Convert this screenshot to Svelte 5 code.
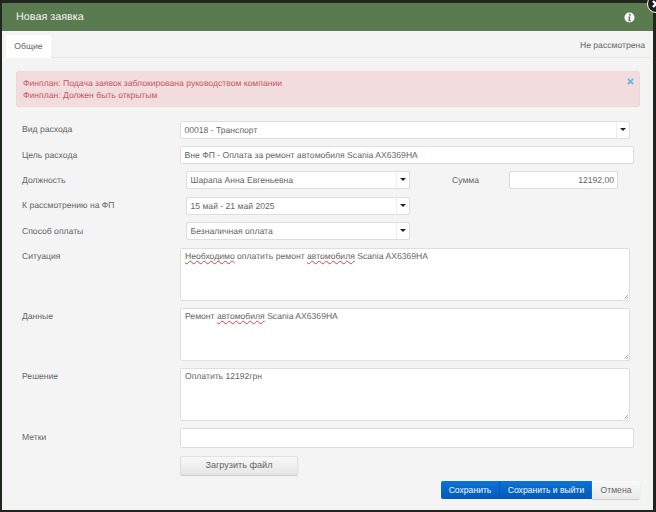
<script>
  const notes = ['Финплан: Подача заявок заблокирована руководством компании', 'Финплан: Должен быть открытым'];
</script>

<div class="modal">
  <button class="close" aria-label="Закрыть">
    <svg viewBox="0 0 10 10" width="10" height="10"><path d="M2 2 8 8M8 2 2 8" stroke="#fff" stroke-width="2.4"/></svg>
  </button>
  <header class="head">
    <span class="title">Новая заявка</span>
    <svg class="info" viewBox="0 0 12 12" width="11" height="11">
      <circle cx="6" cy="6" r="5.5" fill="#fff"/>
      <circle cx="6.4" cy="3" r="1.1" fill="#5a7a50"/>
      <path d="M4.7 5h2.4L6.4 8.8h1V10H4.6l.7-3.9h-.8z" fill="#5a7a50"/>
    </svg>
  </header>
  <div class="tabs">
    <div class="tab">Общие</div>
    <div class="status">Не рассмотрена</div>
  </div>
  <div class="alert">
    <div>{#each notes as n}<div>{n}</div>{/each}</div>
    <svg class="x" viewBox="0 0 8 8" width="7" height="7"><path d="M1 1 7 7M7 1 1 7" stroke="#6bb7ea" stroke-width="2.2"/></svg>
  </div>

  <div class="form">
    <div class="row">
      <span class="lab">Вид расхода</span>
      <div class="sel wide"><span>00018 - Транспорт</span><i class="arr"></i></div>
    </div>
    <div class="row low">
      <span class="lab">Цель расхода</span>
      <div class="inp full">Вне ФП - Оплата за ремонт автомобиля Scania AX6369HA</div>
    </div>
    <div class="row r3 low">
      <span class="lab">Должность</span>
      <div class="sel mid"><span>Шарапа Анна Евгеньевна</span><i class="arr"></i></div>
      <span class="sumlab">Сумма</span>
      <div class="inp sum">12192,00</div>
    </div>
    <div class="row r3">
      <span class="lab">К рассмотрению на ФП</span>
      <div class="sel mid"><span>15 май - 21 май 2025</span><i class="arr"></i></div>
    </div>
    <div class="row r3 low">
      <span class="lab">Способ оплаты</span>
      <div class="sel mid"><span>Безналичная оплата</span><i class="arr"></i></div>
    </div>
    <div class="row ta">
      <span class="lab">Ситуация</span>
      <div class="area"><span class="sp">Необходимо</span> оплатить ремонт <span class="sp">автомобиля</span> Scania AX6369HA</div>
    </div>
    <div class="row ta">
      <span class="lab">Данные</span>
      <div class="area">Ремонт <span class="sp">автомобиля</span> Scania AX6369HA</div>
    </div>
    <div class="row ta">
      <span class="lab">Решение</span>
      <div class="area">Оплатить 12192грн</div>
    </div>
    <div class="row tags low">
      <span class="lab">Метки</span>
      <div class="inp full tall"></div>
    </div>
    <div class="row upload">
      <span class="lab"></span>
      <button class="file">Загрузить файл</button>
    </div>
  </div>

  <div class="actions">
    <button class="pri first">Сохранить</button>
    <button class="pri second">Сохранить и выйти</button>
    <button class="cancel">Отмена</button>
  </div>
</div>

<style>
  :global(body) {
    margin: 0;
    background: #20261e;
    font-family: "Liberation Sans", Arial, sans-serif;
    font-size: 8.6px;
    color: #666;
    text-rendering: geometricPrecision;
  }
  .modal {
    position: relative;
    box-sizing: border-box;
    width: 651px;
    height: 507px;
    margin: 3px 0 0 2px;
    background: #f4f4f4;
    filter: blur(0.4px);
  }
  .close {
    position: absolute;
    right: -12px;
    top: -8px;
    width: 18px;
    height: 18px;
    padding: 0;
    border: 1px solid #fff;
    border-radius: 50%;
    background: #1d1d1d;
    display: flex;
    align-items: center;
    justify-content: center;
    z-index: 2;
  }
  .head {
    height: 28px;
    background: #5a7a50;
    display: flex;
    align-items: center;
    justify-content: space-between;
    padding: 0 18px 0 14px;
  }
  .title { color: #f2f5f0; font-size: 10.8px; }
  .tabs {
    height: 27px;
    margin: 0 3px 0 4px;
    border-bottom: 1px solid #e6e6e6;
    display: flex;
    justify-content: space-between;
    align-items: flex-end;
    box-sizing: border-box;
  }
  .tab {
    width: 45px;
    height: 23px;
    box-sizing: border-box;
    background: #fff;
    border-radius: 2px 2px 0 0;
    text-align: center;
    line-height: 22px;
    margin-bottom: -1px;
  }
  .status { align-self: center; padding: 2px 5px 0 0; }
  .alert {
    margin: 13px 13px 0 14px;
    height: 36px;
    box-sizing: border-box;
    background: #f2dcdd;
    border: 1px solid #efd6d8;
    border-radius: 2px;
    padding: 5px 6px;
    color: #c4595f;
    line-height: 12px;
    display: flex;
    justify-content: space-between;
    align-items: flex-start;
  }
  .x { margin-top: 1px; margin-right: -1px; }
  .form { margin-top: 14px; padding-left: 20px; }
  .row { display: flex; align-items: flex-start; height: 18px; margin-bottom: 7px; }
  .r3 { margin-bottom: 7.5px; }
  .lab { width: 158px; flex: none; padding-top: 2px; line-height: 12px; }
  .low .lab { padding-top: 3px; width: 158px; }
  .sel, .inp, .area {
    box-sizing: border-box;
    background: #fff;
    border: 1px solid #dedede;
    border-radius: 2px;
    color: #666;
  }
  .sel {
    height: 18px;
    display: flex;
    justify-content: space-between;
    align-items: center;
    padding-left: 3.5px;
  }
  .wide { width: 450px; }
  .mid { width: 224px; margin-left: 6px; }
  .arr {
    width: 12px;
    height: 16px;
    border-left: 1px solid #eee;
    position: relative;
    flex: none;
  }
  .arr::after {
    content: "";
    position: absolute;
    left: 3px;
    top: 6px;
    border: 3px solid transparent;
    border-top: 3px solid #222;
    border-bottom: 0;
  }
  .inp { height: 18px; line-height: 16px; padding: 0 3.5px; }
  .full { width: 454px; }
  .tall { height: 20px; }
  .sumlab { margin-left: 42px; width: 57px; padding-top: 3px; line-height: 12px; }
  .sum { width: 109px; text-align: right; padding-right: 3px; }
  .ta { height: 53px; }
  .area {
    width: 450px;
    height: 53px;
    padding: 1.5px 4px;
    line-height: 12px;
    position: relative;
  }
  .area::after {
    content: "";
    position: absolute;
    right: 1px;
    bottom: 1px;
    width: 6px;
    height: 6px;
    background: repeating-linear-gradient(135deg, transparent 0 1px, #aaa 1px 2px);
    clip-path: polygon(100% 0, 100% 100%, 0 100%);
  }
  .sp {
    text-decoration: underline wavy #e0403c 1px;
    text-decoration-skip-ink: none;
    text-underline-offset: 1px;
  }
  .tags { height: 20px; margin-bottom: 8px; }
  .file {
    width: 118px;
    height: 19px;
    padding: 0;
    font: inherit;
    font-size: 9.1px;
    color: #666;
    background: linear-gradient(#f8f8f8, #e6e6e6);
    border: 1px solid #e0e0e0;
    border-radius: 2px;
    box-shadow: 0 1px 1px #ccc;
  }
  .actions {
    position: absolute;
    right: 13px;
    bottom: 11px;
    display: flex;
    height: 18px;
  }
  .actions button { font: inherit; padding: 0; height: 18px; border: 0; }
  .pri { background: linear-gradient(#0b74d6, #0358b8); color: #f3f8fd; }
  .first { width: 59px; border-radius: 2px 0 0 2px; border-right: 1px solid #0a56a8 !important; }
  .second { width: 92px; }
  .cancel {
    width: 48px;
    color: #666;
    background: linear-gradient(#f9f9f9, #e9e9e9);
    border-radius: 0 2px 2px 0;
    box-shadow: 0 1px 1px #ccc;
  }
</style>
